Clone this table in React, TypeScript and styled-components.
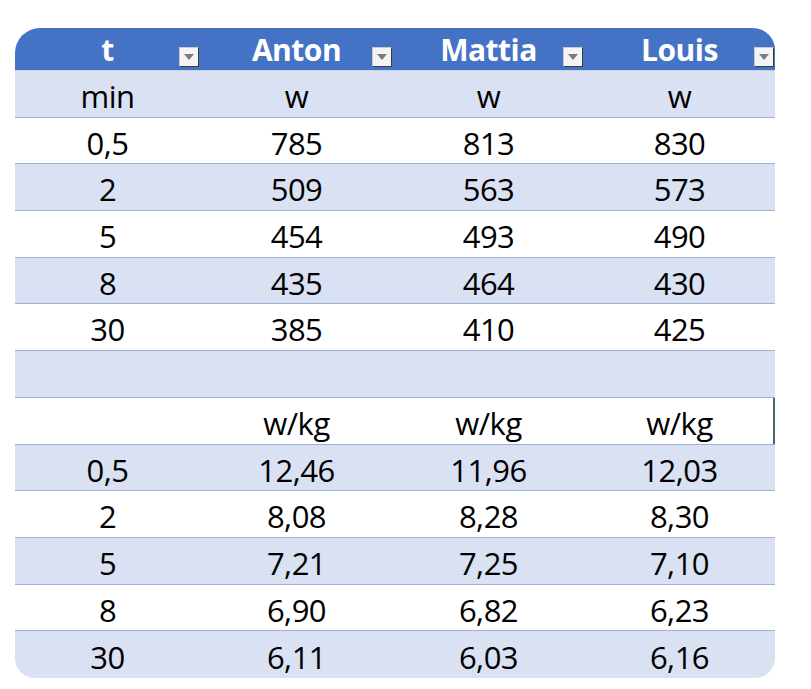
import React from "react";
import styled, { createGlobalStyle } from "styled-components";

const Global = createGlobalStyle`
  html, body { margin: 0; padding: 0; background: #ffffff; }
  body { font-family: "Open Sans", "Noto Sans", sans-serif; }
`;

const COLS = "185px 193px 191px 191px";

const Page = styled.div`
  width: 811px;
  height: 689px;
  padding: 28px 0 0 15px;
  box-sizing: border-box;
  background: #ffffff;
`;

const Table = styled.div`
  width: 760px;
  display: flex;
  flex-direction: column;
  border-radius: 25px 22px 20px 20px;
  overflow: hidden;
`;

const HeaderRow = styled.div`
  display: grid;
  grid-template-columns: ${COLS};
  height: 43px;
  background: #4472c4;
  border-bottom: 1px solid #c9d4ea;
  box-sizing: border-box;
`;

const HeaderCell = styled.div`
  position: relative;
  display: flex;
  align-items: center;
  justify-content: center;
  padding-top: 1px;
  color: #ffffff;
  font-family: "Open Sans", sans-serif;
  font-weight: 700;
  font-size: 30px;
  letter-spacing: -0.5px;
`;

const FilterButton = styled.span`
  position: absolute;
  right: 1px;
  bottom: 3px;
  width: 20px;
  height: 20px;
  box-sizing: border-box;
  background: #f4f4f4;
  border: 1px solid #c8c8c8;
  border-right-color: #3b3b3b;
  border-bottom-color: #3b3b3b;
  display: flex;
  align-items: center;
  justify-content: center;
`;

const Row = styled.div<{ $band: boolean; $last: boolean }>`
  display: grid;
  grid-template-columns: ${COLS};
  height: 46.7px;
  box-sizing: border-box;
  background: ${(p) => (p.$band ? "#d9e1f2" : "#ffffff")};
  border-bottom: ${(p) => (p.$last ? "none" : "1.5px solid #9fb1d4")};
`;

const Cell = styled.div<{ $selected?: boolean }>`
  display: flex;
  align-items: center;
  justify-content: center;
  padding-top: 4px;
  color: #000000;
  font-size: 31px;
  letter-spacing: -0.5px;
  box-shadow: ${(p) => (p.$selected ? "inset -2px 0 0 #4a6b5c" : "none")};
`;

const Caret = () => (
  <svg width="10" height="6" viewBox="0 0 10 6">
    <path d="M0 0 L10 0 L5 6 Z" fill="#7b7b7b" />
  </svg>
);

const headers = ["t", "Anton", "Mattia", "Louis"];

const rows: string[][] = [
  ["min", "w", "w", "w"],
  ["0,5", "785", "813", "830"],
  ["2", "509", "563", "573"],
  ["5", "454", "493", "490"],
  ["8", "435", "464", "430"],
  ["30", "385", "410", "425"],
  ["", "", "", ""],
  ["", "w/kg", "w/kg", "w/kg"],
  ["0,5", "12,46", "11,96", "12,03"],
  ["2", "8,08", "8,28", "8,30"],
  ["5", "7,21", "7,25", "7,10"],
  ["8", "6,90", "6,82", "6,23"],
  ["30", "6,11", "6,03", "6,16"],
];

export default function App() {
  return (
    <>
      <Global />
      <Page>
        <Table>
          <HeaderRow>
            {headers.map((h) => (
              <HeaderCell key={h}>
                {h}
                <FilterButton>
                  <Caret />
                </FilterButton>
              </HeaderCell>
            ))}
          </HeaderRow>
          {rows.map((r, i) => (
            <Row key={i} $band={i % 2 === 0} $last={i === rows.length - 1}>
              {r.map((c, j) => (
                <Cell key={j} $selected={i === 7 && j === 3}>
                  {c}
                </Cell>
              ))}
            </Row>
          ))}
        </Table>
      </Page>
    </>
  );
}
